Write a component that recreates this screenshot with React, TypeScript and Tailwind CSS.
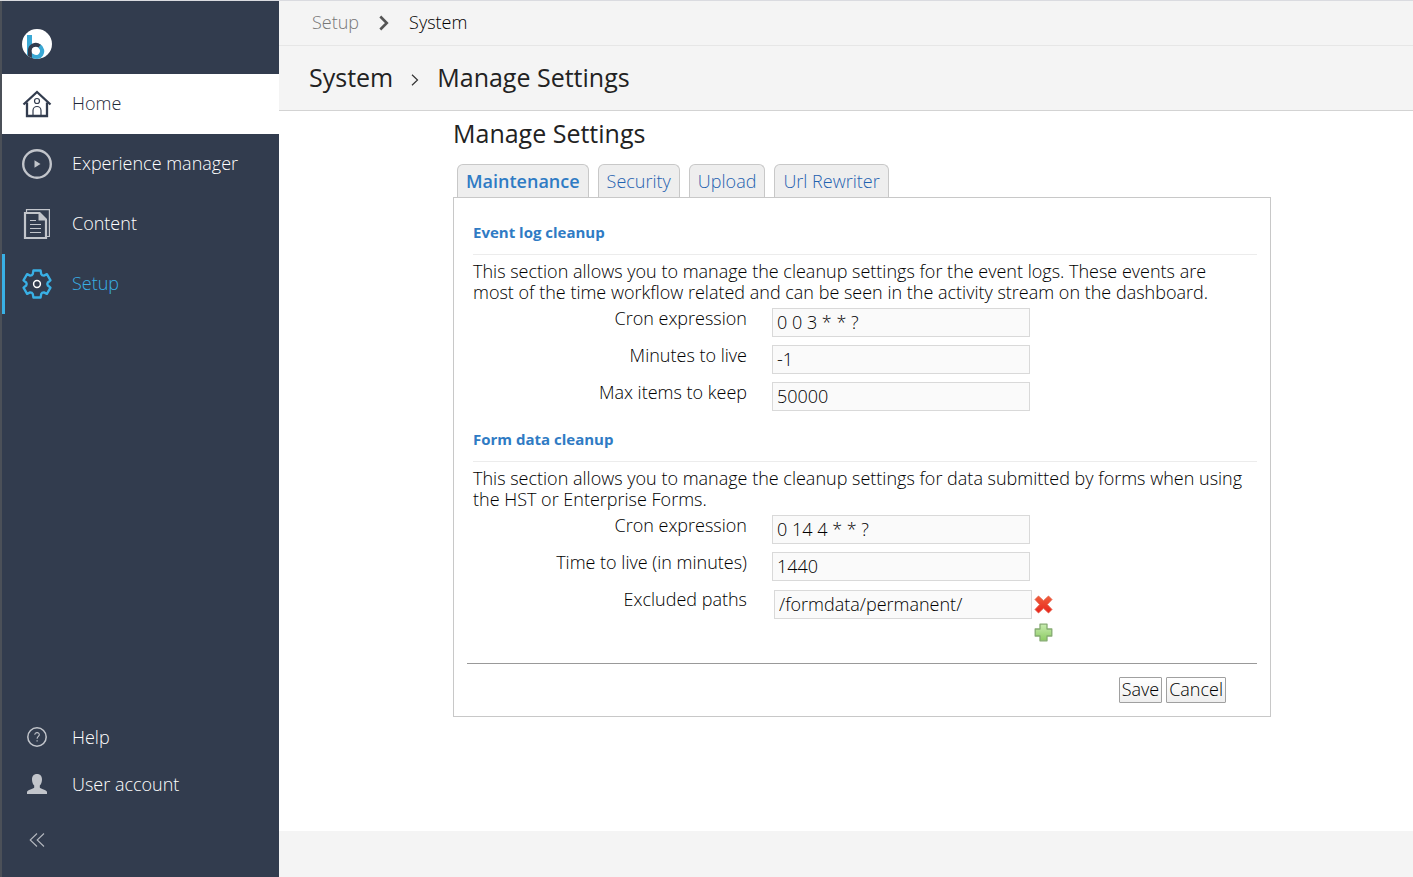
import React from "react";

const LogoIcon = () => (
  <svg viewBox="0 0 30 30" className="size-[30px]" aria-hidden="true">
    <defs>
      <clipPath id="disc">
        <circle cx="15" cy="15" r="15" />
      </clipPath>
    </defs>
    <circle cx="15" cy="15" r="15" fill="#fff" />
    <g clipPath="url(#disc)">
      <path d="M5 6h5v10l-3 12-2-2z" fill="#3aa8d4" />
      <path d="M17.300 17.200A5.900 5.900 0 0 1 11 27.200V30" fill="none" stroke="#3aa8d4" strokeWidth="4.400" />
      <path d="M7.900 30v-8.500a5.800 5.800 0 0 1 9.600-4.200" fill="none" stroke="#323c4e" strokeWidth="4" />
      <circle cx="13.500" cy="21.800" r="3.800" fill="#fff" />
    </g>
  </svg>
);

const HomeIcon = () => (
  <svg viewBox="0 0 30 30" className="size-[30px]" fill="none" stroke="#323c4e" aria-hidden="true">
    <path d="M1.500 15.500 15 3l13.500 12.500" strokeWidth="2.300" />
    <path d="M5 13.500V27h20V13.500" strokeWidth="2.300" />
    <circle cx="15" cy="12" r="2.500" strokeWidth="1.200" />
    <path d="M11 27v-5.500a4 4 0 0 1 8 0V27" strokeWidth="1.200" />
  </svg>
);

const PlayIcon = () => (
  <svg viewBox="0 0 30 30" className="size-[30px]" aria-hidden="true">
    <circle cx="15" cy="15" r="13.800" fill="none" stroke="#c2c5cb" strokeWidth="2.400" />
    <path d="M12.500 11.200v7.600l6-3.800z" fill="#c2c5cb" />
  </svg>
);

const ContentIcon = () => (
  <svg viewBox="0 0 30 30" className="size-[30px]" fill="none" stroke="#c2c5cb" aria-hidden="true">
    <path d="M4.500 3V.6h22.900v26.900H25" strokeWidth="1.200" />
    <path d="M17 4H3v25h21V11" strokeWidth="2.200" />
    <path d="M16.500 3H18l7 7v1.500h-8.500z" fill="#c2c5cb" stroke="none" />
    <path d="M8 11.500h6M8 15.500h11M8 19.500h11M8 23.500h11" strokeWidth="1.200" />
  </svg>
);

const GearIcon = () => (
  <svg viewBox="0 0 30 30" className="size-[30px]" fill="none" aria-hidden="true">
    <path
      d="M11.400 1.500h7.200L19.200 5q.8 1.700 2.700 1.600l3-1.500 3.600 6.300-2.700 2.100q-1 1.500 0 3l2.700 2.100-3.600 6.300-3-1.500q-1.900-.1-2.700 1.600l-.6 3.500h-7.200l-.6-3.500q-.8-1.700-2.700-1.600l-3 1.500-3.600-6.300 2.700-2.100q1-1.500 0-3l-2.700-2.100 3.600-6.300 3 1.500Q10 6.700 10.800 5z"
      stroke="#39b0e5"
      strokeWidth="2.300"
      strokeLinejoin="round"
    />
    <circle cx="15" cy="15" r="3.400" stroke="#fff" strokeWidth="1.500" />
  </svg>
);

const HelpIcon = () => (
  <svg viewBox="0 0 20 20" className="size-5" fill="none" stroke="#c2c5cb" aria-hidden="true">
    <circle cx="10" cy="10" r="9.200" strokeWidth="1.500" />
    <path d="M7.800 7.800c0-3 4.600-2.800 4.500-.1 0 1.700-2.200 1.800-2.200 4" strokeWidth="1.100" />
    <path d="M10.100 13.200v1.300" strokeWidth="1.200" />
  </svg>
);

const UserIcon = () => (
  <svg viewBox="0 0 20 20" className="size-5" fill="#c2c5cb" aria-hidden="true">
    <path d="M10 0c3.300 0 5 2.200 5 5.500 0 2.600-.9 4.700-2.200 6v2c0 1.200 6 1.800 7.200 4.200V20H0v-2.300c1.200-2.400 7.200-3 7.200-4.200v-2C5.900 10.200 5 8.100 5 5.500 5 2.200 6.700 0 10 0z" />
  </svg>
);

const CollapseIcon = () => (
  <svg viewBox="0 0 16 14" className="h-[14px] w-4" fill="none" stroke="#b4b8bf" strokeWidth="1.100" aria-hidden="true">
    <path d="M8 .5 1.200 7 8 13.500M15 .5 8.200 7l6.800 6.500" />
  </svg>
);

const RemoveIcon = () => (
  <svg viewBox="0 0 19 19" className="size-[19px]" aria-hidden="true">
    <defs>
      <linearGradient id="red" x1="0" y1="0" x2="0" y2="1">
        <stop offset="0" stopColor="#f0603c" />
        <stop offset="1" stopColor="#e8231c" />
      </linearGradient>
    </defs>
    <path
      d="m4.500 1 5 4.700 5-4.700L18 4.500l-4.700 5 4.700 5-3.500 3.500-5-4.700-5 4.700L1 14.500l4.700-5-4.700-5z"
      fill="url(#red)"
      stroke="#e2553f"
      strokeWidth=".8"
      strokeLinejoin="round"
    />
  </svg>
);

const AddIcon = () => (
  <svg viewBox="0 0 19 19" className="size-[19px]" aria-hidden="true">
    <defs>
      <linearGradient id="green" x1="0" y1="0" x2="0" y2="1">
        <stop offset="0" stopColor="#c8ecb0" />
        <stop offset="1" stopColor="#8ccb62" />
      </linearGradient>
    </defs>
    <path
      d="M6 1.200h7V6h4.800v7H13v4.800H6V13H1.200V6H6z"
      fill="url(#green)"
      stroke="#85ab72"
      strokeWidth="1.300"
      strokeLinejoin="round"
    />
  </svg>
);

type NavItem = { label: string; icon: React.ReactNode; className: string };

const mainNav: NavItem[] = [
  { label: "Home", icon: <HomeIcon />, className: "bg-white text-[#1f2838] border-white" },
  { label: "Experience manager", icon: <PlayIcon />, className: "text-white border-transparent" },
  { label: "Content", icon: <ContentIcon />, className: "text-white border-transparent" },
  { label: "Setup", icon: <GearIcon />, className: "text-[#39b0e5] border-[#39b0e5]" },
];

const tabs = ["Maintenance", "Security", "Upload", "Url Rewriter"];

const inputClass =
  "h-[29px] w-[258px] border border-[#d9d9d9] bg-[#fafafa] px-1 pb-0.5 text-black outline-none";

const buttonClass =
  "h-[26px] rounded-[1px] border border-[#a0a0a0] bg-linear-to-b from-white to-[#eee] px-0.5 pb-0.5 leading-[22px]";

function Field({ id, label, children }: { id: string; label: string; children: React.ReactNode }) {
  return (
    <div className="grid grid-cols-[274px_1fr] items-start gap-x-[25px]">
      <label htmlFor={id} className="text-right leading-[21px]">
        {label}
      </label>
      {children}
    </div>
  );
}

function Section({ title, text, children }: { title: string; text: string; children: React.ReactNode }) {
  return (
    <section>
      <h3 className="border-b border-[#ececec] pb-[11px] text-[15px] leading-[21px] font-bold text-[#2f7bc4]">{title}</h3>
      <p className="mt-1.5 mb-[5px] pr-2 leading-[21px]">{text}</p>
      <div className="flex flex-col gap-2">{children}</div>
    </section>
  );
}

export default function App() {
  return (
    <div className="flex min-h-screen border-t border-[#dadbe0] bg-[#f4f4f4] font-['Open_Sans',sans-serif] text-[18px] font-light text-black">
      <aside className="flex w-[279px] shrink-0 flex-col border-l-2 border-[#4b5058] bg-[#323c4e]">
        <a href="#" aria-label="Dashboard" className="flex h-[73px] items-center px-5 pt-3">
          <LogoIcon />
        </a>
        <nav aria-label="Main" className="flex flex-col">
          {mainNav.map((item) => (
            <a
              key={item.label}
              href="#"
              className={`flex h-[60px] items-center gap-5 border-l-3 pl-[17px] ${item.className}`}
            >
              {item.icon}
              <span className="pb-0.5">{item.label}</span>
            </a>
          ))}
        </nav>
        <nav aria-label="Account" className="mt-auto flex flex-col gap-px pb-1.5 text-white">
          <a href="#" className="flex h-[46px] items-center gap-[25px] pl-[25px]">
            <HelpIcon />
            Help
          </a>
          <a href="#" className="flex h-[46px] items-center gap-[25px] pl-[25px]">
            <UserIcon />
            User account
          </a>
          <button type="button" aria-label="Collapse menu" className="flex h-[63px] items-center pl-[27px]">
            <CollapseIcon />
          </button>
        </nav>
      </aside>

      <div className="flex min-w-0 flex-1 flex-col">
        <nav aria-label="Breadcrumb" className="flex h-[45px] items-center border-b border-[#e6e6e6] pb-px pl-[33px]">
          <a href="#" className="text-[#777]">
            Setup
          </a>
          <svg viewBox="0 0 10 16" className="mx-5 h-4 w-[10px]" fill="none" stroke="#555" strokeWidth="2.600" aria-hidden="true">
            <path d="M1.300 1.500 7.800 8l-6.500 6.500" />
          </svg>
          <a href="#">System</a>
        </nav>
        <header className="flex h-[65px] items-center border-b border-[#d3d3d3] pl-[30px] text-[25px] font-normal text-[#222]">
          <a href="#">System</a>
          <svg viewBox="0 0 8 12" className="mx-[18px] mt-1 h-3 w-2" fill="none" stroke="#333" strokeWidth="1.200" aria-hidden="true">
            <path d="M1 .8 6.500 6 1 11.200" />
          </svg>
          <span>Manage Settings</span>
        </header>

        <main className="flex-1 bg-white">
          <div className="mx-auto max-w-[850px] pl-8">
            <h1 className="pt-[5px] text-[25px] leading-[34px] font-normal text-[#222]">Manage Settings</h1>
            <div className="mt-[14px] flex gap-[9px] pl-1" role="tablist">
              {tabs.map((tab, i) => (
                <button
                  key={tab}
                  type="button"
                  role="tab"
                  aria-selected={i === 0}
                  className={`h-[33px] rounded-t-md border border-b-0 border-[#c8c8c8] bg-[#eee] px-2 ${i === 0 ? "font-semibold text-[#2f7bc4]" : "text-[#1f62b0]"}`}
                >
                  {tab}
                </button>
              ))}
            </div>
            <form className="border border-[#c8c8c8] px-[13px] pt-6 pb-[13px]">
              <div className="flex flex-col gap-[18px] pl-1.5">
                <Section
                  title="Event log cleanup"
                  text="This section allows you to manage the cleanup settings for the event logs. These events are most of the time workflow related and can be seen in the activity stream on the dashboard."
                >
                  <Field id="log-cron" label="Cron expression">
                    <input id="log-cron" defaultValue="0 0 3 * * ?" className={inputClass} />
                  </Field>
                  <Field id="log-ttl" label="Minutes to live">
                    <input id="log-ttl" defaultValue="-1" className={inputClass} />
                  </Field>
                  <Field id="log-max" label="Max items to keep">
                    <input id="log-max" defaultValue="50000" className={inputClass} />
                  </Field>
                </Section>
                <Section
                  title="Form data cleanup"
                  text="This section allows you to manage the cleanup settings for data submitted by forms when using the HST or Enterprise Forms."
                >
                  <Field id="form-cron" label="Cron expression">
                    <input id="form-cron" defaultValue="0 14 4 * * ?" className={inputClass} />
                  </Field>
                  <Field id="form-ttl" label="Time to live (in minutes)">
                    <input id="form-ttl" defaultValue="1440" className={inputClass} />
                  </Field>
                  <Field id="form-paths" label="Excluded paths">
                    <div className="grid grid-cols-[258px_19px] items-center gap-x-0.5 gap-y-1 pt-px pl-0.5">
                      <input id="form-paths" defaultValue="/formdata/permanent/" className={inputClass} />
                      <button type="button" aria-label="Remove path">
                        <RemoveIcon />
                      </button>
                      <button type="button" aria-label="Add path" className="col-start-2">
                        <AddIcon />
                      </button>
                    </div>
                  </Field>
                </Section>
              </div>
              <div className="mt-[21px] flex justify-end gap-1 border-t border-[#999] pt-[13px] pr-[31px]">
                <button type="button" className={buttonClass}>
                  Save
                </button>
                <button type="button" className={buttonClass}>
                  Cancel
                </button>
              </div>
            </form>
          </div>
        </main>
        <footer className="h-[46px]" />
      </div>
    </div>
  );
}
